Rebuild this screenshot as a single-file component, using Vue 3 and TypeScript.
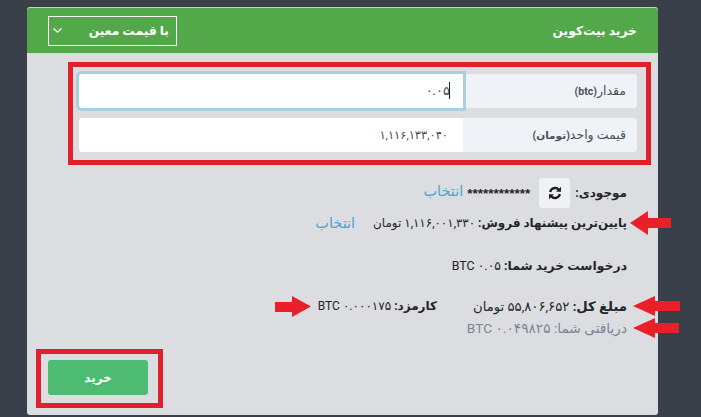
<script setup lang="ts">
interface Field {
  label: string;
  unit: string;
  value: string;
  focused: boolean;
}

const fields: Field[] = [
  { label: 'مقدار', unit: '(btc)', value: '۰.۰۵', focused: true },
  { label: 'قیمت واحد', unit: '(تومان)', value: '۱,۱۱۶,۱۳۳,۰۴۰', focused: false },
];
</script>

<template>
  <div class="page">
    <section class="card" dir="rtl">
      <header class="card__head">
        <h1 class="card__title">خرید بیت‌کوین</h1>
        <div class="mode">
          <span>با قیمت معین</span>
          <svg width="11" height="7" viewBox="0 0 11 7" aria-hidden="true">
            <path d="M1.5 1.500 5.500 5.200 9.500 1.500" fill="none" stroke="#fff" stroke-width="1.3" />
          </svg>
        </div>
      </header>

      <div class="card__body">
        <div class="marked marked--fields">
          <div v-for="field in fields" :key="field.label" class="field">
            <div class="field__label">
              {{ field.label }}<small>{{ field.unit }}</small>
            </div>
            <div class="field__input" :class="{ 'field__input--focus': field.focused }">
              <span v-if="field.focused" class="caret"></span>
              {{ field.value }}
            </div>
          </div>
        </div>

        <div class="row row--balance">
          <b>موجودی:</b>
          <button class="refresh" type="button" aria-label="refresh">
            <svg width="14" height="14" viewBox="0 0 14 14" aria-hidden="true">
              <path d="M2.200 6A4.900 4.900 0 0 1 10.800 3.800" fill="none" stroke="#1d1f22" stroke-width="2.400" />
              <path d="M13 .8v5H8z" fill="#1d1f22" />
              <path d="M11.800 8A4.900 4.900 0 0 1 3.200 10.200" fill="none" stroke="#1d1f22" stroke-width="2.400" />
              <path d="M1 13.200v-5h5z" fill="#1d1f22" />
            </svg>
          </button>
          <span class="stars">************</span>
          <a class="pick">انتخاب</a>
        </div>

        <div class="row row--offer">
          <span><b>پایین‌ترین پیشنهاد فروش:</b> ۱,۱۱۶,۰۰۱,۳۳۰ تومان</span>
          <a class="pick">انتخاب</a>
          <svg class="arrow arrow--offer" width="41" height="24" viewBox="0 0 41 24"><path d="M0 12 18 0v7h23v10H18v7z" /></svg>
        </div>

        <div class="row row--request">
          <span><b>درخواست خرید شما:</b> ۰.۰۵ BTC</span>
        </div>

        <div class="row row--total">
          <span class="total"><b>مبلغ کل:</b> ۵۵,۸۰۶,۶۵۲ تومان</span>
          <span class="fee"><b>کارمزد:</b> ۰.۰۰۰۱۷۵ BTC</span>
          <svg class="arrow arrow--total" width="47" height="20" viewBox="0 0 47 20"><path d="M0 10 22 0v5h25v10H22v5z" /></svg>
          <svg class="arrow arrow--fee" width="36" height="21" viewBox="0 0 36 21"><path d="M36 10.500 17 0v6H0v10h17v5z" /></svg>
        </div>

        <div class="row row--receive">
          <span>دریافتی شما: ۰.۰۴۹۸۲۵ BTC</span>
          <svg class="arrow arrow--receive" width="46" height="20" viewBox="0 0 46 20"><path d="M0 10 22 0v5h24v10H22v5z" /></svg>
        </div>

        <div class="marked marked--buy">
          <button class="buy" type="button">خرید</button>
        </div>
      </div>
    </section>
  </div>
</template>

<style>
html,
body {
  margin: 0;
  background: #3a4049;
}
</style>

<style scoped>
.page {
  width: 701px;
  height: 417px;
  padding: 7px 43px 0 27px;
  box-sizing: border-box;
  overflow: hidden;
  background: #3a4049;
  font-family: Roboto, "DejaVu Sans", sans-serif;
  color: #23262b;
}

.card {
  height: 408px;
  background: #dcdde0;
  border-radius: 3px;
  border-top: 1px solid #c9d2c8;
  box-sizing: border-box;
}

.card__head {
  display: flex;
  align-items: center;
  justify-content: space-between;
  height: 45px;
  padding: 0 21px;
  background: #53a849;
  border-radius: 3px 3px 0 0;
  color: #fff;
}

.card__title {
  margin: 0;
  font-size: 12.3px;
  font-weight: 700;
}

.mode {
  display: flex;
  align-items: center;
  justify-content: space-between;
  width: 129px;
  height: 30px;
  padding: 0 7px 0 3px;
  box-sizing: border-box;
  border: 1px solid #fff;
  font-size: 12.3px;
  font-weight: 700;
}

.card__body {
  position: relative;
}

.marked {
  border: 5px solid #e0202a;
  box-sizing: border-box;
}

.marked--fields {
  width: 583px;
  height: 103px;
  margin: 9px 7px 0 0;
  padding: 7px 9px 7px 6px;
  display: flex;
  flex-direction: column;
  gap: 10px;
}

.field {
  display: flex;
  height: 34px;
}

.field__label {
  width: 174px;
  flex: none;
  padding-right: 11px;
  box-sizing: border-box;
  background: #eff2f6;
  border-radius: 0 3px 3px 0;
  font-size: 12.5px;
  line-height: 34px;
  color: #4b5058;
}

.field__label small {
  font-size: 10.5px;
  font-weight: 700;
}

.field__input {
  position: relative;
  flex: 1;
  padding-right: 15px;
  background: #fff;
  border-radius: 3px 0 0 3px;
  font-size: 11.5px;
  line-height: 34px;
  color: #444a52;
}

.field__input--focus {
  padding-right: 13px;
  font-size: 13px;
  box-shadow: 0 0 0 3px #a9cfdf;
}

.caret {
  position: absolute;
  right: 13px;
  top: 8px;
  width: 1px;
  height: 17px;
  background: #222;
}

.row {
  position: relative;
  display: flex;
  align-items: center;
  margin-right: 31px;
  font-size: 12.4px;
  white-space: nowrap;
}

.row b {
  font-weight: 700;
}

.row--balance {
  height: 30px;
  margin-top: 13px;
  font-size: 12px;
}

.refresh {
  display: flex;
  align-items: center;
  justify-content: center;
  width: 31px;
  height: 30px;
  margin: 0 5px 0 9px;
  padding: 0;
  border: 0;
  border-radius: 3px;
  background: #eff1f4;
}

.stars {
  font-family: "Liberation Sans", sans-serif;
  font-size: 13.5px;
  font-weight: 700;
}

.pick {
  font-size: 14.5px;
  color: #4fa3cf;
}

.row--balance .pick {
  margin: 0 4px 3px 0;
}

.row--offer {
  height: 18px;
  margin-top: 6px;
  gap: 18px;
  font-size: 11.9px;
}

.row--request {
  height: 18px;
  margin-top: 24px;
}

.row--total {
  height: 18px;
  margin-top: 23px;
  font-size: 13.2px;
}

.total {
  width: 190px;
  flex: none;
}

.fee {
  font-size: 12px;
}

.row--receive {
  height: 18px;
  margin-top: 4px;
  font-size: 13.7px;
  color: #7b8394;
}

.marked--buy {
  width: 127px;
  height: 59px;
  margin: 12px 495px 0 0;
  padding: 6px 10px;
}

.buy {
  display: block;
  width: 100px;
  height: 35px;
  padding: 0;
  border: 0;
  border-radius: 3px;
  background: #4dbb72;
  color: #fff;
  font-family: inherit;
  font-size: 12px;
  font-weight: 700;
}

.arrow {
  position: absolute;
  fill: #e9202a;
}

.arrow--offer {
  right: -44px;
  top: -3px;
}

.arrow--total {
  right: -53px;
  top: -1px;
}

.arrow--fee {
  right: 316px;
  top: -1px;
}

.arrow--receive {
  right: -52px;
  top: -1px;
}
</style>
